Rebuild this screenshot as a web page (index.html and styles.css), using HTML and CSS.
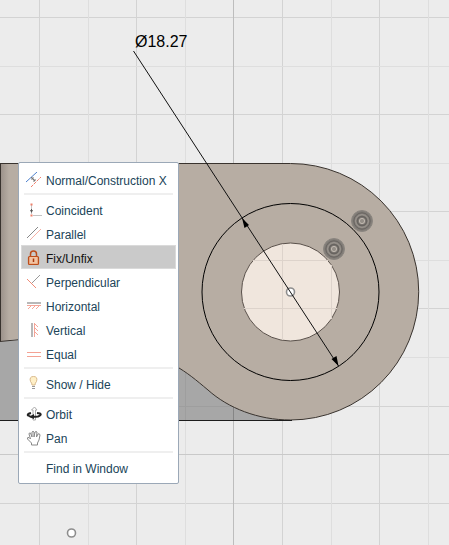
FILE: index.html
```
<!DOCTYPE html>
<html lang="en">
<head>
<meta charset="utf-8">
<meta name="viewport" content="width=device-width, initial-scale=1">
<title>Sketch</title>
<link rel="stylesheet" href="styles.css">
</head>
<body>
<main class="viewport">
  <svg class="scene" role="img" aria-label="Sketch with diameter dimension">
    <defs>
      <g id="point"><circle r="4" fill="#fff" stroke="#8d8d8d" stroke-width="1.6"/></g>
      <g id="glyph" fill="none" stroke="#67635f">
        <circle r="10.5" fill="#827d78" stroke="#8b8680"/>
        <circle r="8.2" stroke="#67635f"/>
        <circle r="6.3" stroke="#a09a93"/>
        <circle r="4.6" stroke="#67635f" stroke-width="1.5"/>
        <circle r="2.6" fill="#948e87" stroke="#c2bab1"/>
      </g>
      <linearGradient id="edge"><stop offset="0" stop-color="#998f88"/><stop offset="1" stop-color="#b7ada3"/></linearGradient>
    </defs>
    <g class="grid">
      <path stroke="#d3d3d3" d="M39.5 0V4000M136.5 0V4000M282.5 0V4000M379.5 0V4000M0 17.5H4000M0 114.5H4000M0 211.5H4000M0 308.5H4000M0 406.5H4000M0 503.5H4000"/>
      <path stroke="#dedede" d="M88.5 0V4000M185.5 0V4000M331.5 0V4000M428.5 0V4000M0 66.5H4000M0 163.5H4000M0 260.5H4000M0 357.5H4000"/>
      <path stroke="#bdbdbd" d="M233.5 0V4000"/>
      <path stroke="#c9c9c9" d="M0 454.5H4000"/>
    </g>
    <path fill="#a7a7a7" d="M0 340H180L290 420H0Z"/>
    <path stroke="#9e9e9e" d="M185.500 373V420M178 406.500H233"/>
    <path stroke="#858585" d="M233.500 406V420"/>
    <path fill="#b7ada3" d="M0 163.500H290.500A128.250 128.250 0 0 1 290.500 420C258 420 228 408 208 390C196 380 188 373 174 365L100 330L0 341Z"/>
    <path fill="url(#edge)" d="M0 164H9V340L0 341Z"/>
    <path fill="none" stroke="#39332e" d="M0 163.500H290.500A128.250 128.250 0 0 1 290.500 420C258 420 228 408 208 390C196 380 188 373 174 365M0 341.500L20 339.500M.5 164V341"/>
    <path stroke="#1d1d1d" d="M0 420.500H292"/>
    <circle cx="290.500" cy="292" r="49" fill="#f0e6dd" stroke="#59504a"/>
    <path stroke="#ddd3cb" d="M282.500 244V340M331.500 265V319M253 260.500H328M244 308.500H337"/>
    <circle cx="290.500" cy="292" r="88.500" fill="none" stroke="#000"/>
    <use href="#glyph" x="362" y="221"/>
    <use href="#glyph" x="334" y="249"/>
    <use href="#point" x="290.500" y="292"/>
    <use href="#point" x="71.500" y="533"/>
    <path stroke="#111" d="M133.500 51L338.500 366"/>
    <path d="M242 218L249 225L244.500 228ZM338.500 366L336.500 356L331.500 359Z"/>
    <text class="dimension" x="135" y="47">Ø18.27</text>
  </svg>

  <nav class="menu" aria-label="Sketch context menu">
    <button class="item"><svg class="icon" viewBox="0 0 16 16"><path stroke="#4d80ce" d="M0 10L11 0"/><path stroke="#f17f6d" stroke-dasharray="3 1" d="M5 15L15 5"/><path stroke="#777" d="M5 5L9 9M6 8V6H8M7 9H9V7"/></svg>Normal/Construction X</button>
    <hr>
    <button class="item"><svg class="icon" viewBox="0 0 16 16"><path stroke="#c4c4c4" d="M5.500 2V12M7 13.500H16"/><path stroke="#555" d="M5.500 7V10"/><path fill="#ee806b" d="M4.500 1.500H6.500V3.500H4.500ZM4.500 12.500H6.500V14.500H4.500Z"/><path fill="#555" d="M4 8H7L5.500 11Z"/></svg>Coincident</button>
    <button class="item"><svg class="icon" viewBox="0 0 16 16"><path stroke="#888" d="M1 12L12 1"/><path stroke="#f5b0a5" d="M4 14L15 3"/></svg>Parallel</button>
    <button class="item active"><svg class="icon" viewBox="0 0 16 16"><path stroke="#bd4d1b" stroke-width="1.500" d="M4.500 7V4Q4.500 1 7.500 1T10.500 4V7"/><rect x="2.500" y="6.500" width="10" height="8" rx="1" fill="#edb18a" stroke="#bd4d1b" stroke-width="1.200"/><path stroke="#fff0df" d="M4 8H11M4 10H11M4 12H11" opacity=".6"/><path stroke="#a9380e" stroke-width="1.500" d="M7.500 8.500V12"/></svg>Fix/Unfix</button>
    <button class="item"><svg class="icon" viewBox="0 0 16 16"><path stroke="#999" d="M5 10L14 1"/><path stroke="#f08b77" d="M1 5L10 14"/></svg>Perpendicular</button>
    <button class="item"><svg class="icon" viewBox="0 0 16 16"><path stroke="#b8b8b8" stroke-width="2" d="M1 5H15"/><path stroke="#f5a598" d="M1 7.500H15M5 8L2 11M9 8L6 11M13 8L10 11"/></svg>Horizontal</button>
    <button class="item"><svg class="icon" viewBox="0 0 16 16"><path stroke="#b8b8b8" stroke-width="2" d="M6 1V15"/><path stroke="#f5a598" d="M8.500 1V15M9 2L12 5M9 6L12 9M9 10L12 13"/></svg>Vertical</button>
    <button class="item"><svg class="icon" viewBox="0 0 16 16"><path stroke="#f4a294" d="M1 6.500H15M1 10.500H15"/></svg>Equal</button>
    <hr>
    <button class="item"><svg class="icon" viewBox="0 0 16 16"><path fill="#fff0c8" stroke="#d8b98b" d="M6 9Q6 7 4.500 5.500Q3 .5 7.500 .5Q12 .5 10.500 5.500Q9 7 9 9Z"/><path stroke="#999" d="M6 10.500H9M6 12.500H9"/></svg>Show / Hide</button>
    <hr>
    <button class="item"><svg class="icon" viewBox="0 0 16 16"><path fill="#fff" stroke="#aaa" d="M7 14V4H5.500L8.500 1L11 4H9.500V14Z"/><path stroke="#222" stroke-width="2" d="M5 7Q1 8 2 9.500Q5 11.500 12 10.500Q16 9 14 7.500L11 7"/><path fill="#222" d="M3 11L8 8V13Z"/></svg>Orbit</button>
    <button class="item"><svg class="icon" viewBox="0 0 16 16"><path fill="#fff" stroke="#888" stroke-linejoin="round" d="M5.500 15V13L1.500 9Q1 7 3 7.500L4.500 9L3 4Q3 2.500 4.500 3L6 7V2Q7 .5 8 2V7L9 2Q10 1 11 2L10.500 7L12 4Q13.500 3 14 5L13 10L11.500 13V15Z"/></svg>Pan</button>
    <hr>
    <button class="item"><span class="icon"></span>Find in Window</button>
  </nav>
</main>
</body>
</html>
```
FILE: styles.css
```
* {
  box-sizing: border-box;
}

body {
  margin: 0;
  font-family: "Liberation Sans", Arial, sans-serif;
}

.viewport {
  position: relative;
  min-height: 100vh;
  padding: 162px 0 0 18px;
  overflow: hidden;
  background: #ececec;
}

.scene {
  position: absolute;
  inset: 0;
  width: 100%;
  height: 100%;
}

.grid {
  shape-rendering: crispEdges;
}

.dimension {
  font-size: 16px;
}

.menu {
  position: relative;
  display: flex;
  flex-direction: column;
  width: max-content;
  min-width: 161px;
  padding: 4px 2px;
  border: 1px solid #9ba8b7;
  border-radius: 2px;
  background: #fff;
}

.item {
  display: flex;
  align-items: center;
  gap: 4px;
  height: 24px;
  padding: 4px 8px 0 4px;
  border: 1px solid transparent;
  background: none;
  color: #204459;
  font-family: inherit;
  font-size: 12px;
  line-height: 16px;
  text-align: left;
  white-space: nowrap;
}

.item.active,
.item:hover {
  border-color: #dadada;
  background: #cacaca;
  color: #111;
}

.icon {
  flex: none;
  width: 16px;
  height: 16px;
  margin-bottom: 2px;
  fill: none;
}

.menu hr {
  width: calc(100% - 6px);
  height: 2px;
  margin: 2px 3px;
  border: 0;
  background: #efefef;
}
```
